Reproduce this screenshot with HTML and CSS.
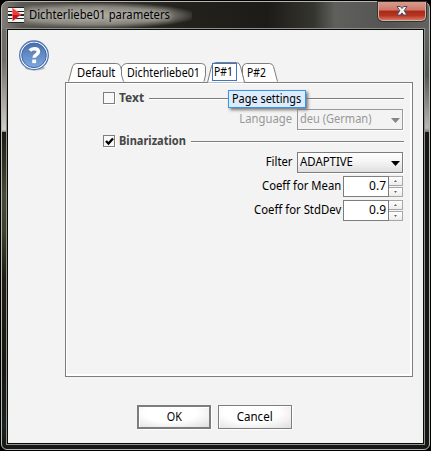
FILE: index.html
```html
<!DOCTYPE html>
<html lang="en">
<head>
<meta charset="utf-8">
<title>Dichterliebe01 parameters</title>
<link rel="stylesheet" href="styles.css">
</head>
<body>
<div class="window">
  <header class="titlebar">
    <svg class="app-icon" width="16" height="16" viewBox="0 0 16 16">
      <path fill="#f3f3f3" d="M0 0h16v16H0z"/>
      <path fill="#222" d="M0 0h16v1H0zM0 4h16v1H0zM0 7h16v2H0zM0 11h16v1H0zM0 15h16v1H0z"/>
      <path fill="#ef3a35" stroke="#ff8078" stroke-width=".6" d="M4.500 1L13 7.500 4.500 14z"/>
      <path fill="#c81418" d="M5 8h7L5 13.500z"/>
    </svg>
    <span class="title"><span class="t-title">Dichterliebe01 parameters</span></span>
    <button class="close" aria-label="Close">
      <svg width="14" height="12" viewBox="0 0 14 12"><path fill="#f4f4f4" stroke="#4a4860" d="M2 1.500H5.300L7 3.500 8.700 1.500H12L9.200 5.700 12 10H8.700L7 7.900 5.300 10H2l2.800-4.300z"/></svg>
    </button>
  </header>
  <main class="dialog">
    <svg class="help" width="32" height="32" viewBox="0 0 32 32">
      <defs><linearGradient id="blue" x2="0" y2="1"><stop stop-color="#496fae"/><stop offset="1" stop-color="#7fa9df"/></linearGradient></defs>
      <ellipse cx="16" cy="28" rx="10" ry="2.500" fill="#bdbdbd"/>
      <circle cx="15" cy="15.300" r="14.300" fill="#fff" stroke="#5075af" stroke-width="1.300"/>
      <circle cx="15" cy="15.300" r="12.300" fill="url(#blue)" stroke="#3e66a6"/>
      <path fill="none" stroke="#fff" stroke-width="3.600" d="M10.800 10.700c1.200-1.400 2.700-1.900 4.500-1.900 2.800 0 4.100 1.100 4.100 3 0 3.200-4.300 2.800-4.300 6"/>
      <path fill="#fff" d="M13.200 19.600h3.900v3.500h-3.900z"/>
    </svg>
    <section class="tabbed">
      <nav class="tabs">
        <div class="tab tab-default"><svg width="57" height="21"><path d="M.5 19.500L4.500 4.500Q5.500 1.500 8.500 1.500H48.500Q51.500 1.500 52.500 4.500L56.500 19.500"/></svg><span class="t-default">Default</span></div>
        <div class="tab tab-name"><svg width="91" height="21"><path d="M2.500 19.500L.5 13V5Q2.500 1.500 5.500 1.500H80.500Q83.500 1.500 84.500 4.500V13L83 19.500"/></svg><span class="t-name">Dichterliebe01</span></div>
        <div class="tab tab-one"><svg width="38" height="21"><path d="M.5 20.500L4.500 4.500Q5.500.5 8.500.5H29.500Q32.500.5 33.500 4.500L37.500 20.500"/></svg><span class="focus"><span class="t-page">P#1</span></span></div>
        <div class="tab tab-two"><svg width="36" height="21"><path d="M2 19.500L.5 13V5Q1.500 1.500 4.500 1.500H27.500Q30.500 1.500 31.500 4.500L35.500 19.500"/></svg><span class="t-page">P#2</span></div>
      </nav>
      <div class="pane">
        <div class="group">
          <span class="check"></span><b class="t-text">Text</b><i class="rule"></i>
        </div>
        <div class="row language">
          <label class="t-lang">Language</label>
          <div class="select disabled"><span class="t-deu">deu (German)</span><svg width="9" height="5"><path d="M0 0h9L4.500 5z" fill="#858585"/></svg></div>
        </div>
        <div class="group">
          <span class="check"><svg width="9" height="9" viewBox="0 0 9 9"><path d="M1 4L3.500 6.500 8 1.500" fill="none" stroke="#000" stroke-width="2.300"/></svg></span><b class="t-bin">Binarization</b><i class="rule"></i>
        </div>
        <div class="row filter">
          <label class="t-filter">Filter</label>
          <div class="select"><span class="t-adapt">ADAPTIVE</span><svg width="9" height="5"><path d="M0 0h9L4.500 5z"/></svg></div>
        </div>
        <div class="row spin">
          <label class="t-mean">Coeff for Mean</label>
          <div class="value"><span>0.7</span></div>
          <div class="steps"><i><svg width="3" height="2"><path d="M0 2h3L1.500 0z"/></svg></i><i><svg width="3" height="2"><path d="M0 0h3L1.500 2z"/></svg></i></div>
        </div>
        <div class="row spin">
          <label class="t-std">Coeff for StdDev</label>
          <div class="value"><span>0.9</span></div>
          <div class="steps"><i><svg width="3" height="2"><path d="M0 2h3L1.500 0z"/></svg></i><i><svg width="3" height="2"><path d="M0 0h3L1.500 2z"/></svg></i></div>
        </div>
        <div class="tooltip"><span class="t-tip">Page settings</span></div>
      </div>
    </section>
    <footer class="actions">
      <button class="btn primary"><span class="t-ok">OK</span></button>
      <button class="btn"><span class="t-cancel">Cancel</span></button>
    </footer>
  </main>
</div>
</body>
</html>
```
FILE: styles.css
```css
* { box-sizing: border-box; }
body { margin: 0; background: #000; width: 431px; height: 451px; overflow: hidden; font: 12px/16px "Noto Sans", sans-serif; color: #000; }
svg { display: block; flex: none; }
span, label, b { white-space: nowrap; }
button { font: inherit; color: inherit; padding: 0; }

.window {
  margin: 1px; width: 429px; height: 449px;
  border: 1px solid #b5b5b0; border-radius: 7px 7px 6px 6px;
  padding: 0 4px 4px;
  background:
    linear-gradient(90deg, #817c77 0, #5a5852 20px, transparent 75px) 0 0 / 100% 27px no-repeat,
    linear-gradient(90deg, #4d4a44 0, #24221d 42%, #1d1b17 62%, #353530 73%, #5f605c 78%, #555653 90%, #62635f) 0 0 / 100% 27px no-repeat,
    linear-gradient(#716c68 0, #716c68 30%, #d1cfca 98%, #777 100%) 0 27px / 5px 103px no-repeat,
    linear-gradient(#656765 0, #535552 45%, #b8b8b3 96%, #777 100%) 100% 27px / 5px 103px no-repeat,
    linear-gradient(#1c1a13, #464c34 20%, #3b422d 31%, #201d13 45%, #171711 75%, #192322 92%, #131713) 0 130px / 5px 320px no-repeat,
    #151814;
}
.titlebar { height: 26px; display: flex; padding: 0 0 0 2px; }
.app-icon { margin-top: 5px; position: relative; z-index: 1; }
.title { margin: 1px 0 0 -10px; padding: 4px 14px 4px 15px; width: 178px; height: 25px; border-radius: 12px; background: radial-gradient(ellipse at 45% 50%, #aaa9a0 0, #918f87dd 50%, #807e7699 62%, transparent 76%); }
.title span { text-shadow: 0 0 5px #c4c3bb, 0 0 8px #b8b7af; }
.close { margin: 0 -1px 0 auto; width: 48px; height: 19px; border: 1px solid #c0b4af; border-top: 0; border-radius: 0 0 5px 5px; background: linear-gradient(#d99c8d 0, #cd7767 45%, #a92717 50%, #b63521 75%, #da7460); display: grid; place-items: center; box-shadow: 0 0 0 1px #40302c; }
.dialog { height: 417px; border: 1px solid #8f918e; outline: 1px solid #080a08; outline-offset: -2px; padding: 1px; background: #f3f3f3; display: grid; grid-template: 345px 1fr / 57px 1fr; }
.help { margin: 10px 0 0 11px; }
.tabbed { padding-top: 32px; width: 348px; }
.tabs { height: 20px; display: flex; padding-left: 3px; position: relative; z-index: 1; }
.tab { display: grid; height: 21px; align-items: start; }
.tab > * { grid-area: 1 / 1; }
.tab > svg path { fill: #fff; stroke: #7d7d7d; }
.tab-default > span { margin: 3px 0 0 9px; }
.tab-name { margin-left: -4px; width: 87px; }
.tab-name > span { margin: 3px 0 0 6px; }
.tab-one { width: 35px; z-index: 1; margin-left: -1px; }
.focus { margin: 1px 0 0 5px; width: 25px; height: 18px; border: 1px solid #3c76c4; background: #fff; line-height: 15px; }
.focus .t-page { margin: 0 0 0 1px; }
.tab-two > span { margin: 3px 0 0 5px; }
.pane { height: 295px; border: 1px solid #7d7d7d; box-shadow: inset 1px 0 #fff, inset -2px -2px #fff, inset 0 1px #fff; padding: 7px 8px 0 37px; position: relative; }
.group { height: 16px; display: flex; align-items: center; color: #454545; }
.check { width: 12px; height: 12px; border: 1px solid #7d7d7d; background: #f8f8f8; margin: -1px 4px 0 0; padding: 1px 0 0 1px; box-shadow: 1px 1px #fff; }
.group b { height: 16px; }
.rule { height: 1px; background: #7d7d7d; box-shadow: 0 1px #fff; flex: 1; margin-left: 5px; }
.row { display: flex; justify-content: flex-end; padding-right: 1px; }
.row label { padding-top: 2px; margin-right: 5px; }
.language { margin: 3px 0; height: 21px; color: #989898; }
.select { width: 106px; height: 21px; border: 1px solid #7d7d7d; background: linear-gradient(#fff, #f5f5f5 45%, #dfdfdf); box-shadow: 1px 1px #fff; padding: 1px 2px; display: flex; justify-content: space-between; }
.select svg { margin-top: 7px; }
.select.disabled { background: none; border-color: #989898; }
.filter { margin-top: 3px; height: 21px; }
.spin { height: 21px; margin-top: 3px; }
.spin label { margin-right: 2px; }
.value { width: 46px; border: 1px solid #7d7d7d; background: #fff; text-align: right; padding: 1px 2px; }
.steps { width: 14px; display: flex; flex-direction: column; gap: 1px; }
.steps i { height: 10px; border: 1px solid #a7a7a7; border-left: 0; background: linear-gradient(#fff, #ececec); display: grid; place-items: center; }
.steps path { fill: #666; }
.tooltip { position: absolute; left: 162px; top: 7px; width: 78px; height: 18px; border: 1px solid #3694ed; background: #dcecfc; padding-left: 3px; box-shadow: 2px 2px 3px #777; }
.actions { grid-column: 1 / 3; display: flex; gap: 7px; padding: 30px 0 0 129px; }
.btn { width: 74px; height: 24px; border: 1px solid #7d7d7d; background: radial-gradient(ellipse 75% 90% at 45% 30%, #fff 50%, #dadada 115%); box-shadow: 1px 1px #fff, inset 1px 1px #fff; }
.btn.primary { border-width: 2px; }

/* Condensed label text */
[class^="t-"] { display: inline-block; transform-origin: 0 50%; }
.row label[class^="t-"] { transform-origin: 100% 50%; }
.btn [class^="t-"] { transform-origin: 50% 50%; }
.t-title { transform: scaleX(.937); }
.t-default { transform: scaleX(.93); }
.t-name { transform: scaleX(.89); }
.t-page { transform: scaleX(.86); }
.t-tip { transform: scaleX(.91); }
.t-lang { transform: scaleX(.94); }
.t-deu { transform: scaleX(.92); }
.group .t-bin { transform: scaleX(.92); margin-right: -6px; }
.t-filter, .t-mean { transform: scaleX(.94); }
.t-std { transform: scaleX(.945); }
.t-adapt { transform: scaleX(.95); }
.t-ok { transform: scaleX(.9); }
.t-cancel { transform: scaleX(.96); }
```
